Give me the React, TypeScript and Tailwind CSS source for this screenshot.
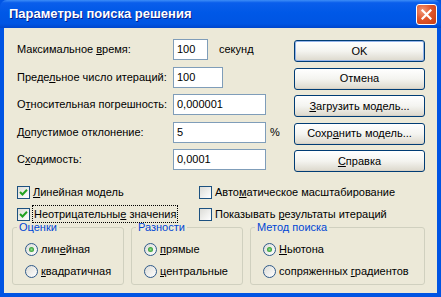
import type { ReactNode } from 'react';

function TextBox({ value, width }: { value: string; width: string }) {
  return (
    <div className={`h-[21px] ${width} flex items-center border border-[#7F9DB9] bg-white px-[3px]`}>
      {value}
    </div>
  );
}

function XpButton({ children, isDefault }: { children: ReactNode; isDefault?: boolean }) {
  return (
    <div
      className={`flex h-[22px] w-[131px] items-center justify-center rounded-[3px] border border-[#003C74] bg-gradient-to-b from-white via-[#F4F4F0] to-[#DCD8CC] ${
        isDefault ? 'shadow-[inset_0_0_0_1px_#94B4EA]' : 'shadow-[inset_0_-1px_0_#D6D0C5]'
      }`}
    >
      {children}
    </div>
  );
}

function CheckBox({ checked }: { checked?: boolean }) {
  return (
    <div className="flex h-[13px] w-[13px] shrink-0 items-center justify-center border border-[#1C5180] bg-gradient-to-br from-[#DCDCD7] to-white">
      {checked && (
        <svg width="9" height="9" viewBox="0 0 9 9">
          <path d="M1 4 L3.5 6.5 L8 1.8" fill="none" stroke="#21A121" strokeWidth="2" />
        </svg>
      )}
    </div>
  );
}

function Radio({ checked }: { checked?: boolean }) {
  return (
    <div className="flex h-[13px] w-[13px] shrink-0 items-center justify-center rounded-full border border-[#2F5A8A] bg-gradient-to-br from-[#DCDCD7] to-white">
      {checked && (
        <div className="h-[5px] w-[5px] rounded-full bg-[radial-gradient(circle,#8FE08F_0%,#3DA43D_60%,#1E8A1E_100%)]" />
      )}
    </div>
  );
}

function Group({ title, width, children }: { title: string; width: string; children: ReactNode }) {
  return (
    <fieldset className={`${width} rounded-[3px] border border-[#D0D0BF] pb-[3px]`}>
      <legend className="ml-[4px] px-[2px] leading-[13px] text-[#0046D5]">{title}</legend>
      <div className="flex flex-col gap-[2px] pt-[5px]">{children}</div>
    </fieldset>
  );
}

function RadioRow({ checked, children }: { checked?: boolean; children: ReactNode }) {
  return (
    <div className="flex h-[20px] items-center gap-[3px] pl-[12px]">
      <Radio checked={checked} />
      <span>{children}</span>
    </div>
  );
}

const fields = [
  { label: <>Максимальное <span className="underline">в</span>ремя:</>, value: '100', width: 'w-[35px]', unit: 'секунд' },
  { label: <>Преде<span className="underline">л</span>ьное число итераций:</>, value: '100', width: 'w-[50px]' },
  { label: <>О<span className="underline">т</span>носительная погрешность:</>, value: '0,000001', width: 'w-[93px]' },
  { label: <>Д<span className="underline">о</span>пустимое отклонение:</>, value: '5', width: 'w-[93px]', unit: '%' },
  { label: <>С<span className="underline">х</span>одимость:</>, value: '0,0001', width: 'w-[93px]' },
];

export default function App() {
  return (
    <div className="flex h-[297px] w-[441px] flex-col bg-[#0054E3] font-['Liberation_Sans',Arial,sans-serif] text-[11px] text-black">
      {/* Title bar */}
      <div className="flex h-[28px] shrink-0 items-center justify-between rounded-t-[7px] bg-[linear-gradient(to_bottom,#3D8DF7_0%,#0A5EEB_10%,#0058E7_45%,#0055E3_85%,#0046CC_100%)] pl-[9px] pr-[4px]">
        <span className="text-[13px] font-bold text-white [text-shadow:1px_1px_0_#0A1E8C]">
          Параметры поиска решения
        </span>
        <div className="flex h-[21px] w-[21px] items-center justify-center rounded-[3px] border border-white bg-[radial-gradient(circle_at_30%_30%,#F2997A_0%,#E0562C_45%,#C83C12_100%)]">
          <svg width="11" height="11" viewBox="0 0 11 11">
            <path d="M1.5 1.5 L9.5 9.5 M9.5 1.5 L1.5 9.5" stroke="white" strokeWidth="2.2" strokeLinecap="square" />
          </svg>
        </div>
      </div>

      {/* Body */}
      <div className="mx-[4px] mb-[4px] flex flex-1 flex-col bg-[#ECE9D8]">
        <div className="flex pl-[13px] pt-[11px]">
          <div className="flex w-[277px] flex-col gap-[6.5px]">
            {fields.map((f, i) => (
              <div key={i} className="grid h-[21px] grid-cols-[156px_auto] items-center">
                <span>{f.label}</span>
                <div className="flex items-center gap-[4px]">
                  <TextBox value={f.value} width={f.width} />
                  {f.unit && <span className={f.unit === '%' ? '' : 'ml-[7px]'}>{f.unit}</span>}
                </div>
              </div>
            ))}
          </div>
          <div className="mt-[1px] flex flex-col gap-[5.5px]">
            <XpButton isDefault>OK</XpButton>
            <XpButton>Отмена</XpButton>
            <XpButton>
              <span><span className="underline">З</span>агрузить модель...</span>
            </XpButton>
            <XpButton>
              <span>Сохр<span className="underline">а</span>нить модель...</span>
            </XpButton>
            <XpButton>
              <span><span className="underline">С</span>правка</span>
            </XpButton>
          </div>
        </div>

        {/* Checkboxes */}
        <div className="mt-[9px] grid grid-cols-[182px_auto] pl-[13px]">
          <div className="flex h-[22px] items-center gap-[2px]">
            <CheckBox checked />
            <span className="px-[1px]"><span className="underline">Л</span>инейная модель</span>
          </div>
          <div className="flex h-[22px] items-center gap-[2px]">
            <CheckBox />
            <span className="px-[1px]">Авто<span className="underline">м</span>атическое масштабирование</span>
          </div>
          <div className="flex h-[22px] items-center gap-[2px]">
            <CheckBox checked />
            <span className="border border-dotted border-black px-[1px]">
              Неотрицательны<span className="underline">е</span> значения
            </span>
          </div>
          <div className="flex h-[22px] items-center gap-[2px]">
            <CheckBox />
            <span className="px-[1px]">Показывать <span className="underline">р</span>езультаты итераций</span>
          </div>
        </div>

        {/* Group boxes */}
        <div className="-mt-[4px] flex gap-[7px] pl-[8px]">
          <Group title="Оценки" width="w-[112px]">
            <RadioRow checked>лин<span className="underline">е</span>йная</RadioRow>
            <RadioRow><span className="underline">к</span>вадратичная</RadioRow>
          </Group>
          <Group title="Разности" width="w-[112px]">
            <RadioRow checked><span className="underline">п</span>рямые</RadioRow>
            <RadioRow><span className="underline">ц</span>ентральные</RadioRow>
          </Group>
          <Group title="Метод поиска" width="w-[175px]">
            <RadioRow checked><span className="underline">Н</span>ьютона</RadioRow>
            <RadioRow>сопряженных <span className="underline">г</span>радиентов</RadioRow>
          </Group>
        </div>
      </div>
    </div>
  );
}
